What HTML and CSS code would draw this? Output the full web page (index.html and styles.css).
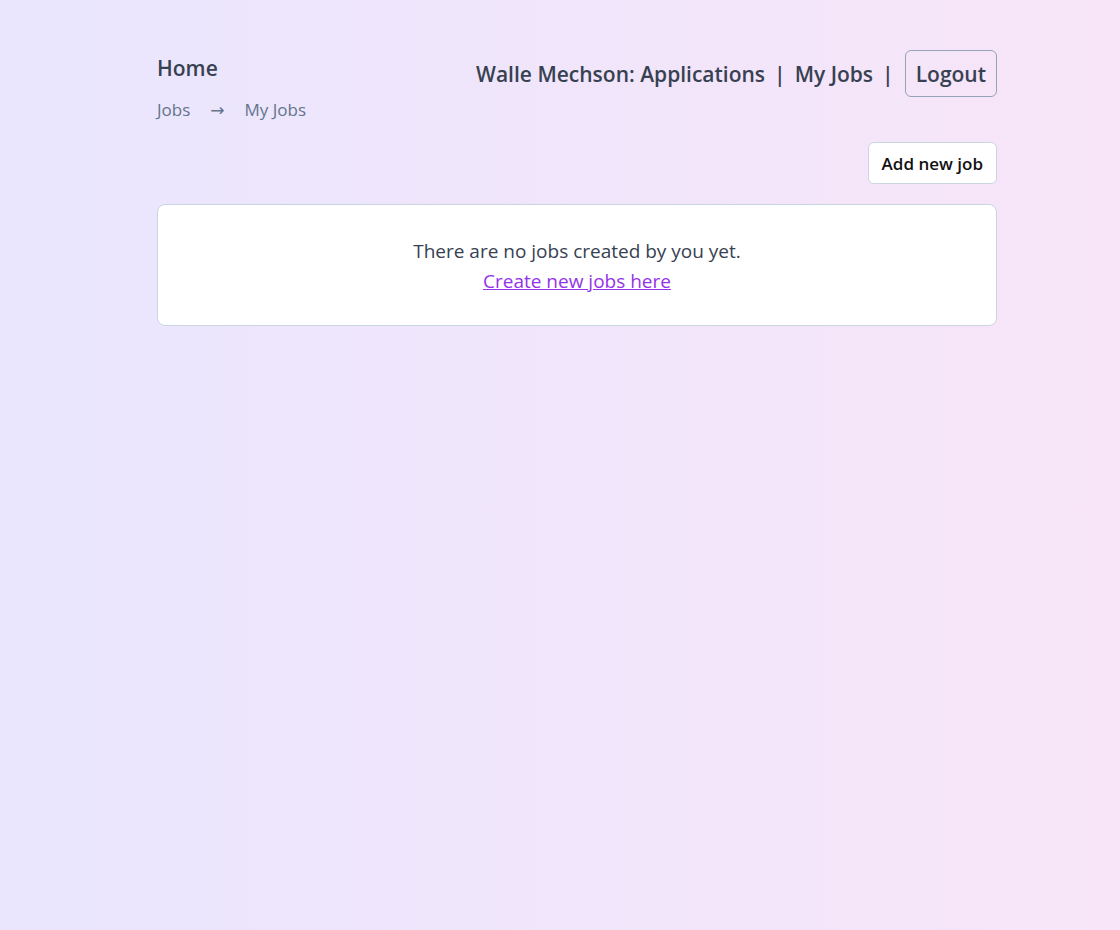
FILE: index.html
```html
<!DOCTYPE html>
<html lang="en">
<head>
<meta charset="utf-8">
<title>My Jobs</title>
<link rel="stylesheet" href="styles.css">
</head>
<body>
<div class="page">
  <div class="container">
    <header class="header">
      <div class="left">
        <a class="home" href="#">Home</a>
        <nav class="crumbs">
          <span>Jobs</span>
          <span class="arrow">→</span>
          <span>My Jobs</span>
        </nav>
      </div>
      <nav class="right">
        <a href="#" class="nav-link">Walle Mechson: Applications</a>
        <span class="sep">|</span>
        <a href="#" class="nav-link">My Jobs</a>
        <span class="sep">|</span>
        <button class="logout">Logout</button>
      </nav>
    </header>
    <div class="actions">
      <button class="add">Add new job</button>
    </div>
    <section class="card">
      <p class="empty">There are no jobs created by you yet.</p>
      <a href="#" class="create">Create new jobs here</a>
    </section>
  </div>
</div>
</body>
</html>
```
FILE: styles.css
```css
html, body {
  margin: 0;
  height: 100%;
}
body {
  font-family: "Open Sans", "Noto Sans", sans-serif;
  background: linear-gradient(to right, #e9e6fe, #f8e5f8);
  color: #374151;
}
.page {
  padding: 50px 123px 0 157px;
}
.container {
  width: 840px;
}
.header {
  display: flex;
  justify-content: space-between;
  align-items: flex-start;
}
.left {
  display: flex;
  flex-direction: column;
}
.home {
  font-size: 21px;
  font-weight: 600;
  color: #374151;
  text-decoration: none;
  line-height: 36px;
}
.crumbs {
  margin-top: 14px;
  font-size: 17px;
  color: #64748b;
  display: flex;
  align-items: center;
  gap: 20px;
  line-height: 20px;
}
.arrow {
  font-family: "DejaVu Sans", sans-serif;
  font-size: 17px;
  color: #64748b;
}
.right {
  display: flex;
  align-items: center;
  gap: 9px;
  font-size: 21px;
  font-weight: 600;
}
.nav-link {
  color: #374151;
  text-decoration: none;
}
.sep {
  font-weight: 600;
}
.logout {
  font: inherit;
  color: #374151;
  background: transparent;
  border: 1px solid #94a3b8;
  border-radius: 6px;
  height: 47px;
  padding: 0 10px;
  margin-left: 2px;
}
.actions {
  display: flex;
  justify-content: flex-end;
  margin-top: 22px;
}
.add {
  font-family: inherit;
  font-size: 17px;
  font-weight: 600;
  color: #111;
  background: #fff;
  border: 1px solid #cbd5e1;
  border-radius: 6px;
  height: 42px;
  padding: 0 13px;
}
.card {
  margin-top: 20px;
  background: #fff;
  border: 1px solid #cbd5e1;
  border-radius: 8px;
  height: 122px;
  box-sizing: border-box;
  padding-top: 2px;
  display: flex;
  flex-direction: column;
  align-items: center;
  justify-content: center;
  font-size: 19px;
  line-height: 30px;
}
.empty {
  margin: 0;
  color: #374151;
}
.create {
  color: #9333ea;
}
```
